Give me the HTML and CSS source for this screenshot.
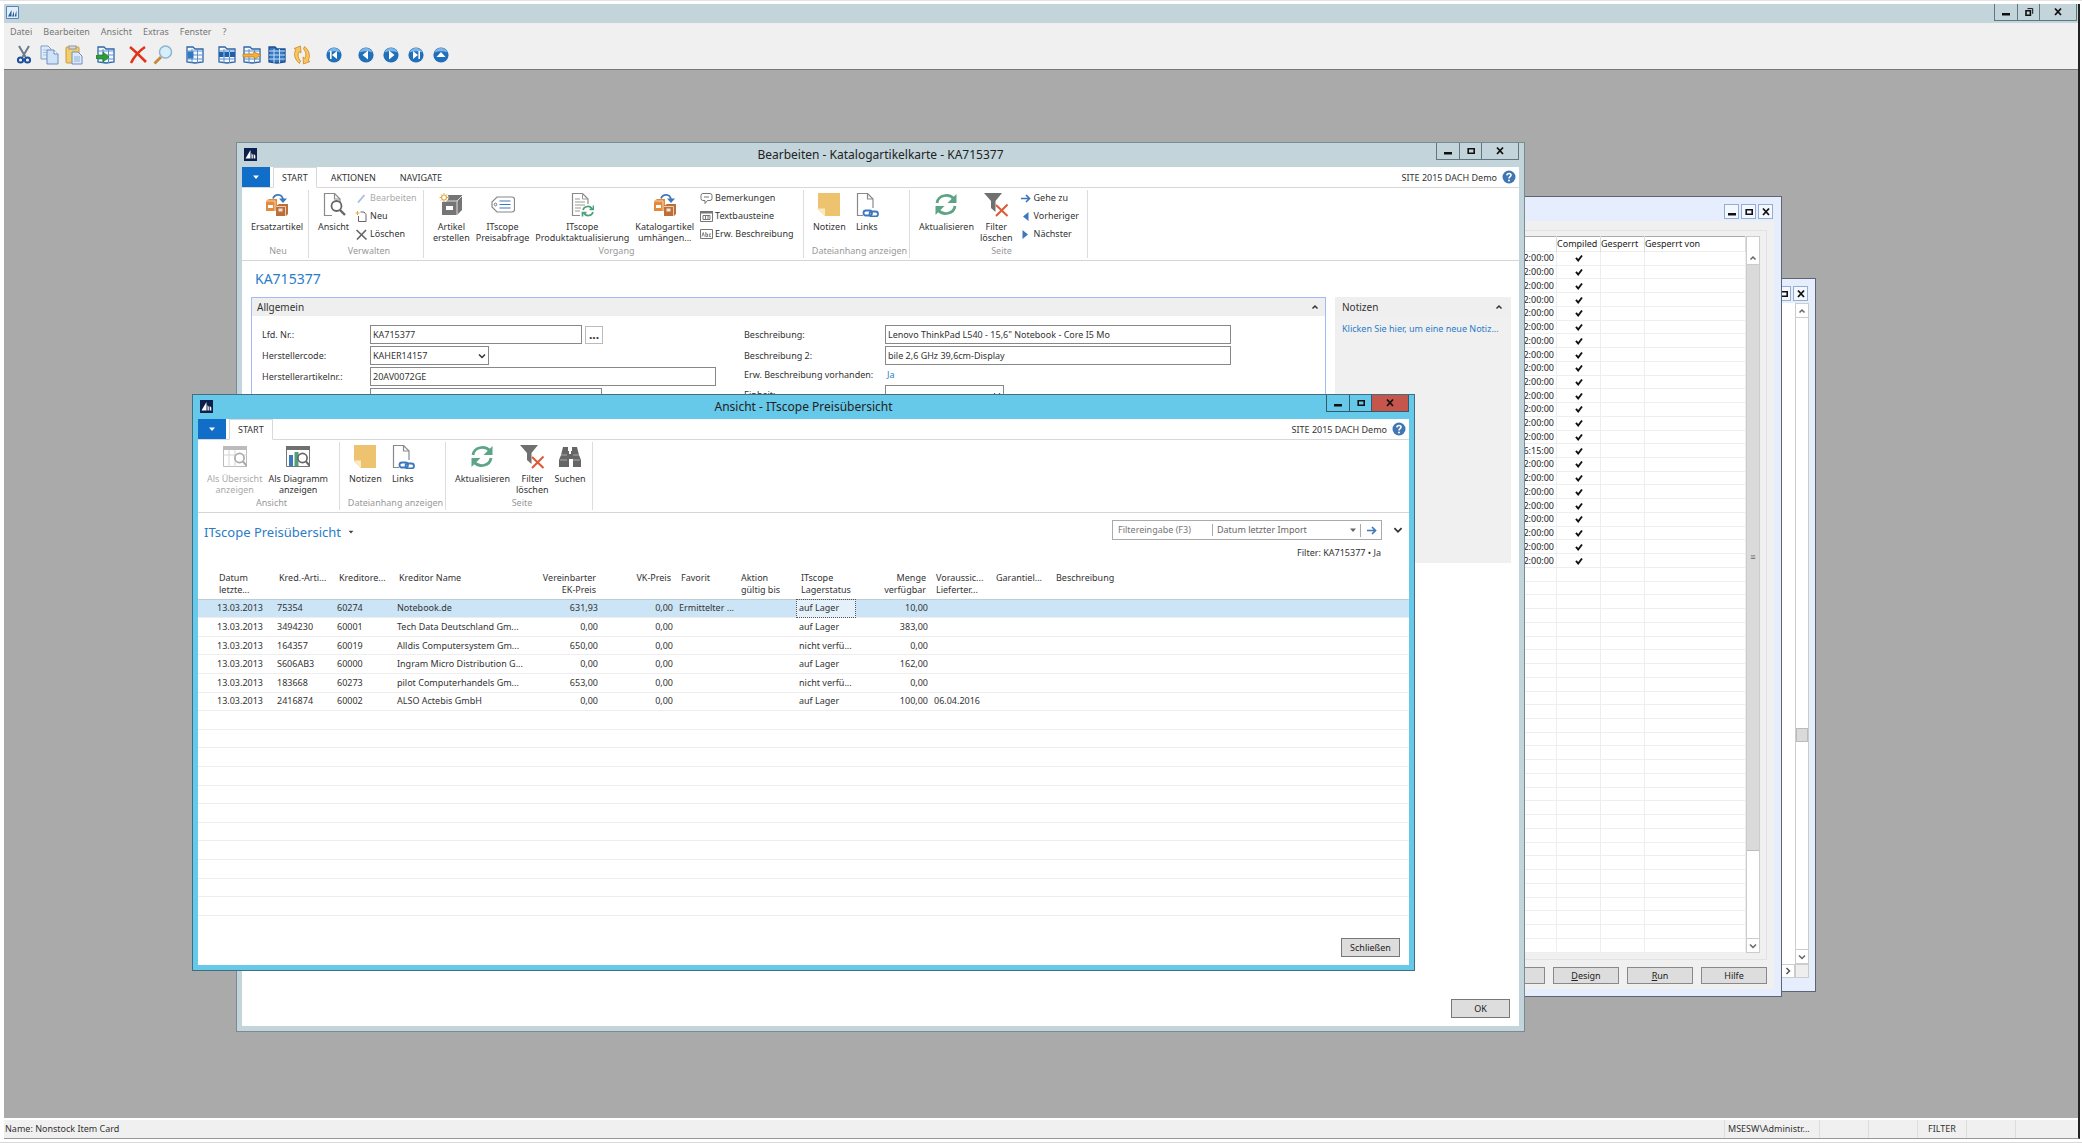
FILE: index.html
```
<!DOCTYPE html>
<html lang="de">

<head>
    <meta charset="UTF-8">
    <meta name="viewport" content="width=device-width, initial-scale=1.0">
    <title>Nonstock Item Card</title>
    <link rel="stylesheet" href="styles.css">
</head>

<body>
    <svg class="sprite" aria-hidden="true">
        <symbol id="i-main" viewBox="0 0 13 13">
            <path d="M.500.500h12v12H.500z" fill="#e3eef7" stroke="#4f86bb" />
            <path d="M2 10.500L5.500 4v6.500zM6 10.500L8 5v5.500zM8.500 10.500l2-6v6z" fill="#2a5f9c" />
        </symbol>
        <symbol id="i-app" viewBox="0 0 13 13">
            <rect width="13" height="13" fill="#0c1f4d" />
            <path d="M1.500 10.500L6.500 2v8.500zM7.500 10.500V5l1.300 2v3.500zM9.700 10.500V6l1.600 1.500v3z" fill="#fff" />
        </symbol>
        <symbol id="i-min" viewBox="0 0 10 10"><path d="M1 6h8v2.500H1z" fill="#111" /></symbol>
        <symbol id="i-max" viewBox="0 0 10 10"><path d="M2.200 2.700h6v4.600h-6z" fill="none" stroke="#111" stroke-width="1.600" /></symbol>
        <symbol id="i-restore" viewBox="0 0 10 10">
            <path d="M2 3.800h4.400v4.400H2z" fill="none" stroke="#111" stroke-width="1.600" />
            <path d="M3.500 1.600h5.200v5.200" fill="none" stroke="#111" />
        </symbol>
        <symbol id="i-close" viewBox="0 0 10 10"><path d="M2 1.500L8 8M8 1.500L2 8" stroke="#111" stroke-width="1.800" /></symbol>
        <symbol id="i-up" viewBox="0 0 10 10"><path d="M2.500 6.500L5 4l2.500 2.500" fill="none" stroke="currentColor" stroke-width="1.500" /></symbol>
        <symbol id="i-down" viewBox="0 0 10 10"><path d="M2 3.500l3 3 3-3" fill="none" stroke="currentColor" stroke-width="1.500" /></symbol>
        <symbol id="i-right" viewBox="0 0 10 10"><path d="M3.500 2l3 3-3 3" fill="none" stroke="currentColor" stroke-width="1.500" /></symbol>
        <symbol id="i-caret" viewBox="0 0 10 10"><path d="M2 3.500h6l-3 3.500z" fill="currentColor" /></symbol>
        <symbol id="i-check" viewBox="0 0 10 10"><path d="M2 4.800l2.200 2.700L8 2.500" fill="none" stroke="#111" stroke-width="1.900" /></symbol>
        <symbol id="i-help" viewBox="0 0 14 14">
            <circle cx="7" cy="7" r="6.500" fill="#3f76b3" />
            <path d="M4.900 5.400C5 2.800 9.200 2.900 9 5.300 8.900 6.700 7 6.700 7 8.400" fill="none" stroke="#fff" stroke-width="1.600" />
            <circle cx="7" cy="10.600" r="1" fill="#fff" />
        </symbol>

        <!-- toolbar -->
        <symbol id="t-cut" viewBox="0 0 20 20">
            <path d="M5 1l6.500 11M15 1L8.500 12" stroke="#6d7b8a" stroke-width="2" />
            <circle cx="6.500" cy="15" r="2.600" fill="none" stroke="#1d4f9c" stroke-width="2" />
            <circle cx="13.500" cy="15" r="2.600" fill="none" stroke="#1d4f9c" stroke-width="2" />
        </symbol>
        <symbol id="t-copy" viewBox="0 0 20 20">
            <path d="M2 1h7l3 3v10H2z" fill="#dceafa" stroke="#7f9fc6" />
            <path d="M4 5h6M4 7.500h6M4 10h6" stroke="#a9c3e4" />
            <path d="M8 5h7l4 4v10H8z" fill="#d0e2f8" stroke="#6c90bf" />
            <path d="M15 5v4h4" fill="#fff" stroke="#6c90bf" />
        </symbol>
        <symbol id="t-paste" viewBox="0 0 20 20">
            <rect x="2" y="2" width="13" height="16" rx="1" fill="#f4cd6c" stroke="#c89a3c" />
            <rect x="5" y="1" width="7" height="3" fill="#d9dde2" stroke="#8c949e" />
            <path d="M8 7h6l4 4v8H8z" fill="#dceafa" stroke="#6c90bf" />
            <path d="M10 12h6M10 14h6M10 16h6" stroke="#92b2dc" />
        </symbol>
        <symbol id="t-grid" viewBox="0 0 20 20">
            <path d="M2 2h6l2 2h8v13l-8 1-8-1z" fill="#f4f9ff" stroke="#2f66a8" stroke-width="1.300" />
            <path d="M2 6h16M2 10h16M2 14h16M7 4v14M12.500 4v14" stroke="#5f8fc9" fill="none" />
        </symbol>
        <symbol id="t-gridgo" viewBox="0 0 20 20">
            <use href="#t-grid" />
            <path d="M0 10.500h7V7l6 5-6 5v-3.500H0z" fill="#2ca02c" stroke="#1a7a22" stroke-width=".7" />
        </symbol>
        <symbol id="t-delete" viewBox="0 0 20 20"><path d="M2 2c5 4 10 9 16 15M17 2C11 6 6 12 3 18" fill="none" stroke="#e0341a" stroke-width="2.600" /></symbol>
        <symbol id="t-find" viewBox="0 0 20 20">
            <path d="M1.500 18.500L8 12" stroke="#c48a3a" stroke-width="2.800" />
            <circle cx="12.500" cy="7" r="6" fill="#d8effb" stroke="#8fb4cc" stroke-width="1.500" />
        </symbol>
        <symbol id="t-gridcol" viewBox="0 0 20 20"><use href="#t-grid" /><path d="M2.500 6.500h6v7h-6z" fill="#2f78c4" /></symbol>
        <symbol id="t-gridrow" viewBox="0 0 20 20"><use href="#t-grid" /><path d="M2 7h16v5H2z" fill="#1f5fa9" /><path d="M7 7v5M12.500 7v5" stroke="#9cc4ee" /></symbol>
        <symbol id="t-gridedit" viewBox="0 0 20 20"><use href="#t-grid" /><path d="M1 9h10l1-2 7 3-6 4-1-2H1z" fill="#f4b13a" stroke="#b87a1c" stroke-width=".7" /></symbol>
        <symbol id="t-gridall" viewBox="0 0 20 20">
            <path d="M2 2h6l2 2h8v13l-8 1-8-1z" fill="#3679c2" stroke="#1d4f8f" stroke-width="1.300" />
            <path d="M2 6h16M2 10h16M2 14h16M7 4v14M12.500 4v14" stroke="#c3ddf7" fill="none" />
        </symbol>
        <symbol id="t-swap" viewBox="0 0 20 20">
            <path d="M7.500 18.500C2 14 1.500 8 4 4.500L2 3.500 8.500 1l.5 7-2-1.500C5.500 9.500 6 13.500 8.500 16z" fill="#fbc55c" stroke="#c88a28" stroke-width=".8" />
            <path d="M12.500 1.500C18 6 18.500 12 16 15.500l2 1-6.500 2.500-.5-7 2 1.500c1.500-3 1-7-1.500-9.500z" fill="#fbc55c" stroke="#c88a28" stroke-width=".8" />
        </symbol>
        <symbol id="t-ball" viewBox="0 0 20 20"><circle cx="10" cy="10" r="7.600" fill="#1f6fba" /><path d="M3.600 7.500a6.800 6.800 0 0 1 12.800 0C12 5.800 8 5.800 3.600 7.500z" fill="#7db6e6" /></symbol>
        <symbol id="t-first" viewBox="0 0 20 20"><use href="#t-ball" /><path d="M13 6v8l-5-4zM6 6h1.600v8H6z" fill="#fff" /></symbol>
        <symbol id="t-prev" viewBox="0 0 20 20"><use href="#t-ball" /><path d="M12 5.500v9L6.500 10z" fill="#fff" /></symbol>
        <symbol id="t-next" viewBox="0 0 20 20"><use href="#t-ball" /><path d="M8 5.500v9l5.500-4.500z" fill="#fff" /></symbol>
        <symbol id="t-last" viewBox="0 0 20 20"><use href="#t-ball" /><path d="M7 6v8l5-4zM12.400 6H14v8h-1.600z" fill="#fff" /></symbol>
        <symbol id="t-top" viewBox="0 0 20 20"><use href="#t-ball" /><path d="M5.500 12h9L10 7z" fill="#fff" /></symbol>

        <!-- ribbon, large -->
        <symbol id="r-boxes" viewBox="0 0 24 24">
            <path d="M8 5.500c2-5 9-5 10 1" fill="none" stroke="#3d78bd" stroke-width="1.800" />
            <path d="M14 5.500h8l-4 4.500z" fill="#3d78bd" />
            <path d="M1 8l3-2h8v11l-2 1H1z" fill="#e58a3a" /><path d="M3 12h5v3H3z" fill="#fff" /><path d="M1 8h9v10" fill="none" stroke="#fbe3cc" stroke-width=".8" />
            <path d="M11 13l3-2h9v10l-2 2H11z" fill="#b9703a" /><path d="M13.500 15.500h4v3h-4z" fill="#f6e2d2" /><path d="M11 13.500h9.500V23" fill="none" stroke="#fbe3cc" stroke-width=".8" />
        </symbol>
        <symbol id="r-view" viewBox="0 0 24 24">
            <path d="M10 22.500H2.500v-22h10l5.500 5.500v3" fill="#fff" stroke="#8a8a8a" stroke-width="1.200" />
            <path d="M12.500.500v5.500H18" fill="none" stroke="#8a8a8a" stroke-width="1.200" />
            <circle cx="14.500" cy="13" r="5" fill="#fff" stroke="#666" stroke-width="1.800" /><path d="M18 17l5 5" stroke="#666" stroke-width="2.400" />
        </symbol>
        <symbol id="r-create" viewBox="0 0 24 24">
            <path d="M3 7l4-5h16v15l-5 5H3z" fill="#757575" /><path d="M3 8h15v14M18 8l5-5" fill="none" stroke="#ddd" />
            <path d="M7 13h7v4H7z" fill="#fff" /><circle cx="5" cy="4.500" r="4.500" fill="#fff" /><circle cx="5" cy="4.500" r="2.500" fill="#fff" stroke="#e3ab45" stroke-width="1.200" />
            <path d="M5 0v1.500M5 7.500V9M.5 4.500H2M8 4.500h1.500M2 1.500l1 1M8 1.500l-1 1M2 7.500l1-1M8 7.500l-1-1" stroke="#e3ab45" />
        </symbol>
        <symbol id="r-tag" viewBox="0 0 24 24">
            <path d="M6 4h15q2.500 0 2.500 2.500v10Q23.500 19 21 19H6l-5-5V9z" fill="#fff" stroke="#888" stroke-width="1.200" />
            <circle cx="4.500" cy="11.500" r="1.300" fill="none" stroke="#777" /><path d="M8.500 8h11M8.500 11.500h11M8.500 15h11" stroke="#3d78bd" stroke-width="1.200" />
        </symbol>
        <symbol id="r-docsync" viewBox="0 0 24 24">
            <path d="M10 22.500H2.500v-22h10l5.500 5.500v5" fill="#fff" stroke="#8a8a8a" stroke-width="1.200" />
            <path d="M12.500.5V6H18M5 6h5M5 9h10M5 12h10M5 15h6M5 18h5" fill="none" stroke="#999" />
            <path d="M13 17c1-4 7-5 9-1M23.500 12.500v4h-4M23 19c-1 4-7 5-9 1M12.500 23.500v-4h4" fill="none" stroke="#4f9f78" stroke-width="1.700" />
        </symbol>
        <symbol id="r-note" viewBox="0 0 24 24"><path d="M1 0h22v23H8l-7-7z" fill="#edc36f" /><path d="M1 15.500h7V23z" fill="#fbe9bf" /></symbol>
        <symbol id="r-link" viewBox="0 0 24 24">
            <path d="M8 22.500H2.500v-22h10l5.500 5.500v9" fill="#fff" stroke="#8a8a8a" stroke-width="1.200" /><path d="M12.500.5V6H18" fill="none" stroke="#8a8a8a" stroke-width="1.200" />
            <rect x="8.500" y="17.500" width="8.500" height="5" rx="2.500" fill="none" stroke="#3d78bd" stroke-width="1.800" /><rect x="14.500" y="18.500" width="8.500" height="5" rx="2.500" fill="none" stroke="#3d78bd" stroke-width="1.800" />
        </symbol>
        <symbol id="r-refresh" viewBox="0 0 24 24">
            <path d="M3 10c1-8 12-10 17-4" fill="none" stroke="#5da487" stroke-width="2.800" /><path d="M22.500 1v9h-9z" fill="#5da487" />
            <path d="M21 13c-1 8-12 10-17 4" fill="none" stroke="#5da487" stroke-width="2.800" /><path d="M1.500 22v-9h9z" fill="#5da487" />
        </symbol>
        <symbol id="r-filter" viewBox="0 0 24 24"><path d="M0 0h18l-6.500 8v11L7 15V8z" fill="#707070" /><path d="M12 12l11.500 11M23.500 11.500L12 23" stroke="#dd5b38" stroke-width="2" /></symbol>
        <symbol id="r-list" viewBox="0 0 24 24">
            <path d="M.500 1.500h23v20H.500z" fill="#fff" stroke="#bbb" /><path d="M0 1h24v4H0z" fill="#bbb" /><path d="M6 5v17M12 5v17M.5 10H24" stroke="#d5d5d5" />
            <circle cx="16.500" cy="13" r="4.600" fill="#fff" stroke="#aaa" stroke-width="1.700" /><path d="M20 16.500l4 4.500" stroke="#aaa" stroke-width="2" />
        </symbol>
        <symbol id="r-chart" viewBox="0 0 24 24">
            <path d="M.500 1.500h23v20H.500z" fill="#fff" stroke="#777" /><path d="M0 1h24v4H0z" fill="#707070" />
            <path d="M3 10h4v11H3z" fill="#3d78bd" /><path d="M8.500 7h4v14h-4z" fill="#4f9f78" />
            <circle cx="16.500" cy="13" r="4.600" fill="#fff" stroke="#666" stroke-width="1.700" /><path d="M20 16.500l4 4.500" stroke="#666" stroke-width="2" />
        </symbol>
        <symbol id="r-search" viewBox="0 0 24 24">
            <path d="M5 2h5v4h1v3h2V6h1V2h5l2 8 2 5v7h-8v-8h-4v8H1v-7l2-5z" fill="#666" /><path d="M3 10h6M15 10h6M2 15h7M15 15h7" stroke="#aaa" />
        </symbol>

        <!-- ribbon, small -->
        <symbol id="s-edit" viewBox="0 0 13 13"><path d="M3 10.500L9.500 3" stroke="#a3bedb" stroke-width="1.800" /></symbol>
        <symbol id="s-new" viewBox="0 0 13 13"><path d="M5.500 2h3.500l2 2.500v7H3.500V6" fill="#fff" stroke="#666" /><path d="M2.500 1v4M.5 3h4" stroke="#e3ab45" /></symbol>
        <symbol id="s-del" viewBox="0 0 13 13"><path d="M1.500 2l10 9.500M11 2L2 11.500" stroke="#666" stroke-width="1.700" /></symbol>
        <symbol id="s-comment" viewBox="0 0 13 13"><path d="M3 1.500h7q2 0 2 2v3q0 2-2 2H7.500l-2.500 3v-3H3q-2 0-2-2v-3q0-2 2-2zM4 5h5" fill="none" stroke="#777" /></symbol>
        <symbol id="s-text" viewBox="0 0 13 13"><path d="M.500 1.500h12v10H.500zM3 5.500h7v4H3zM5.500 5.500v4M8 5.500v4" fill="none" stroke="#777" /><path d="M0 1h13v2.500H0z" fill="#777" /></symbol>
        <symbol id="s-abc" viewBox="0 0 13 13"><path d="M.500 1.500h12v9H.500z" fill="#fff" stroke="#777" /><path d="M2 8.500l1.200-4 1.200 4M5.800 4v4.500h1.700V6H6M11 6H9.300v2.500H11" fill="none" stroke="#777" stroke-width=".9" /></symbol>
        <symbol id="s-goto" viewBox="0 0 13 13"><path d="M2 6.500h8M7 3l3.500 3.500L7 10" fill="none" stroke="#3d78bd" stroke-width="1.700" /></symbol>
        <symbol id="s-prev" viewBox="0 0 13 13"><path d="M9.500 2v9L4 6.500z" fill="#3d78bd" /></symbol>
        <symbol id="s-next" viewBox="0 0 13 13"><path d="M3.500 2v9L9 6.500z" fill="#3d78bd" /></symbol>
    </svg>

    <div class="app">
        <header class="app-title">
            <svg class="app-icon"><use href="#i-main" /></svg>
            <div class="win-buttons">
                <button type="button" aria-label="Minimieren"><svg><use href="#i-min" /></svg></button>
                <button type="button" aria-label="Wiederherstellen"><svg><use href="#i-restore" /></svg></button>
                <button type="button" class="close" aria-label="Beenden"><svg><use href="#i-close" /></svg></button>
            </div>
        </header>
        <nav class="menu">
            <button type="button">Datei</button>
            <button type="button">Bearbeiten</button>
            <button type="button">Ansicht</button>
            <button type="button">Extras</button>
            <button type="button">Fenster</button>
            <button type="button">?</button>
        </nav>
        <div class="toolbar">
            <div class="tools">
                <button type="button" aria-label="Ausschneiden"><svg><use href="#t-cut" /></svg></button>
                <button type="button" aria-label="Kopieren"><svg><use href="#t-copy" /></svg></button>
                <button type="button" aria-label="Einfügen"><svg><use href="#t-paste" /></svg></button>
            </div>
            <div class="tools">
                <button type="button" aria-label="Neu einfügen"><svg><use href="#t-gridgo" /></svg></button>
            </div>
            <div class="tools">
                <button type="button" aria-label="Löschen"><svg><use href="#t-delete" /></svg></button>
                <button type="button" aria-label="Suchen"><svg><use href="#t-find" /></svg></button>
            </div>
            <div class="tools">
                <button type="button" aria-label="Feldfilter"><svg><use href="#t-gridcol" /></svg></button>
            </div>
            <div class="tools">
                <button type="button" aria-label="Tabellenfilter"><svg><use href="#t-gridrow" /></svg></button>
                <button type="button" aria-label="FlowFilter"><svg><use href="#t-gridedit" /></svg></button>
                <button type="button" aria-label="Alle anzeigen"><svg><use href="#t-gridall" /></svg></button>
                <button type="button" aria-label="Sortieren"><svg><use href="#t-swap" /></svg></button>
            </div>
            <div class="tools">
                <button type="button" aria-label="Erster"><svg><use href="#t-first" /></svg></button>
            </div>
            <div class="tools">
                <button type="button" aria-label="Vorheriger"><svg><use href="#t-prev" /></svg></button>
                <button type="button" aria-label="Nächster"><svg><use href="#t-next" /></svg></button>
                <button type="button" aria-label="Letzter"><svg><use href="#t-last" /></svg></button>
                <button type="button" aria-label="Übersicht"><svg><use href="#t-top" /></svg></button>
            </div>
        </div>

        <main class="desktop">
            <section class="classic classic-back">
                <div class="classic-title">
                    <button type="button" aria-label="Maximieren"><svg><use href="#i-max" /></svg></button>
                    <button type="button" aria-label="Schließen"><svg><use href="#i-close" /></svg></button>
                </div>
                <div class="classic-area">
                    <div class="scrollbar">
                        <button type="button" aria-label="Nach oben"><svg><use href="#i-up" /></svg></button>
                        <div class="track"><div class="thumb-small"></div></div>
                        <button type="button" aria-label="Nach unten"><svg><use href="#i-down" /></svg></button>
                    </div>
                </div>
                <div class="scroll-bottom">
                    <button type="button" aria-label="Nach rechts"><svg><use href="#i-right" /></svg></button>
                    <span></span>
                </div>
            </section>

            <section class="classic classic-front">
                <div class="classic-title">
                    <button type="button" aria-label="Minimieren"><svg><use href="#i-min" /></svg></button>
                    <button type="button" aria-label="Maximieren"><svg><use href="#i-max" /></svg></button>
                    <button type="button" aria-label="Schließen"><svg><use href="#i-close" /></svg></button>
                </div>
                <div class="designer">
                    <div class="objects-frame">
                        <table class="objects">
                            <thead>
                                <tr>
                                    <th class="o-time"></th>
                                    <th class="o-flag">Compiled</th>
                                    <th class="o-flag">Gesperrt</th>
                                    <th class="o-by">Gesperrt von</th>
                                </tr>
                            </thead>
                            <tbody id="objectRows"></tbody>
                        </table>
                        <div class="scrollbar">
                            <div class="scroll-head"></div>
                            <button type="button" aria-label="Nach oben"><svg><use href="#i-up" /></svg></button>
                            <div class="track"><div class="thumb">≡</div></div>
                            <button type="button" aria-label="Nach unten"><svg><use href="#i-down" /></svg></button>
                        </div>
                    </div>
                    <div class="designer-buttons">
                        <button type="button" aria-label="Neu"></button>
                        <button type="button"><u>D</u>esign</button>
                        <button type="button"><u>R</u>un</button>
                        <button type="button">Hilfe</button>
                    </div>
                </div>
            </section>

            <section class="window card-window">
                <div class="window-title">
                    <svg class="app-icon"><use href="#i-app" /></svg>
                    <h2>Bearbeiten - Katalogartikelkarte - KA715377</h2>
                    <div class="win-buttons">
                        <button type="button" aria-label="Minimieren"><svg><use href="#i-min" /></svg></button>
                        <button type="button" aria-label="Maximieren"><svg><use href="#i-max" /></svg></button>
                        <button type="button" class="close" aria-label="Schließen"><svg><use href="#i-close" /></svg></button>
                    </div>
                </div>
                <div class="window-body">
                    <div class="tabs">
                        <button type="button" class="file-tab" aria-label="Anwendungsmenü"><svg><use href="#i-caret" /></svg></button>
                        <button type="button" class="tab active">START</button>
                        <button type="button" class="tab">AKTIONEN</button>
                        <button type="button" class="tab">NAVIGATE</button>
                        <span class="company">SITE 2015 DACH Demo</span>
                        <button type="button" class="help" aria-label="Hilfe"><svg><use href="#i-help" /></svg></button>
                    </div>
                    <div class="ribbon">
                        <div class="group g-new">
                            <div class="items">
                                <button type="button" class="big"><svg><use href="#r-boxes" /></svg>Ersatzartikel</button>
                            </div>
                            <span class="caption">Neu</span>
                        </div>
                        <div class="group g-manage">
                            <div class="items">
                                <button type="button" class="big"><svg><use href="#r-view" /></svg>Ansicht</button>
                                <div class="smalls">
                                    <button type="button" class="small" disabled><svg><use href="#s-edit" /></svg>Bearbeiten</button>
                                    <button type="button" class="small"><svg><use href="#s-new" /></svg>Neu</button>
                                    <button type="button" class="small"><svg><use href="#s-del" /></svg>Löschen</button>
                                </div>
                            </div>
                            <span class="caption">Verwalten</span>
                        </div>
                        <div class="group g-process">
                            <div class="items">
                                <button type="button" class="big"><svg><use href="#r-create" /></svg>Artikel<br>erstellen</button>
                                <button type="button" class="big"><svg><use href="#r-tag" /></svg>ITscope<br>Preisabfrage</button>
                                <button type="button" class="big"><svg><use href="#r-docsync" /></svg>ITscope<br>Produktaktualisierung</button>
                                <button type="button" class="big"><svg><use href="#r-boxes" /></svg>Katalogartikel<br>umhängen...</button>
                                <div class="smalls">
                                    <button type="button" class="small"><svg><use href="#s-comment" /></svg>Bemerkungen</button>
                                    <button type="button" class="small"><svg><use href="#s-text" /></svg>Textbausteine</button>
                                    <button type="button" class="small"><svg><use href="#s-abc" /></svg>Erw. Beschreibung</button>
                                </div>
                            </div>
                            <span class="caption">Vorgang</span>
                        </div>
                        <div class="group g-attach">
                            <div class="items">
                                <button type="button" class="big"><svg><use href="#r-note" /></svg>Notizen</button>
                                <button type="button" class="big"><svg><use href="#r-link" /></svg>Links</button>
                            </div>
                            <span class="caption">Dateianhang anzeigen</span>
                        </div>
                        <div class="group g-page">
                            <div class="items">
                                <button type="button" class="big"><svg><use href="#r-refresh" /></svg>Aktualisieren</button>
                                <button type="button" class="big"><svg><use href="#r-filter" /></svg>Filter<br>löschen</button>
                                <div class="smalls">
                                    <button type="button" class="small"><svg><use href="#s-goto" /></svg>Gehe zu</button>
                                    <button type="button" class="small"><svg><use href="#s-prev" /></svg>Vorheriger</button>
                                    <button type="button" class="small"><svg><use href="#s-next" /></svg>Nächster</button>
                                </div>
                            </div>
                            <span class="caption">Seite</span>
                        </div>
                    </div>
                    <h1 class="card-heading">KA715377</h1>
                    <div class="card-content">
                        <form class="fasttab">
                            <div class="fasttab-head">Allgemein<svg><use href="#i-up" /></svg></div>
                            <div class="fields">
                                <div class="column column-left">
                                    <div class="field">
                                        <label for="no">Lfd. Nr.:</label>
                                        <input type="text" id="no" class="w-no" value="KA715377">
                                        <button type="button" class="assist" aria-label="Nummer wählen">...</button>
                                    </div>
                                    <div class="field">
                                        <label for="mcode">Herstellercode:</label>
                                        <div class="combo w-code">
                                            <select id="mcode"><option>KAHER14157</option></select>
                                            <svg><use href="#i-down" /></svg>
                                        </div>
                                    </div>
                                    <div class="field">
                                        <label for="mno">Herstellerartikelnr.:</label>
                                        <input type="text" id="mno" class="w-text" value="20AV0072GE">
                                    </div>
                                    <div class="field">
                                        <label for="vendor">Kreditornr.:</label>
                                        <input type="text" id="vendor" class="w-vendor" value="60274">
                                    </div>
                                </div>
                                <div class="column column-right">
                                    <div class="field">
                                        <label for="desc">Beschreibung:</label>
                                        <input type="text" id="desc" class="w-text" value="Lenovo ThinkPad L540 - 15,6&quot; Notebook - Core I5 Mo">
                                    </div>
                                    <div class="field">
                                        <label for="desc2">Beschreibung 2:</label>
                                        <input type="text" id="desc2" class="w-text" value="bile 2,6 GHz 39,6cm-Display">
                                    </div>
                                    <div class="field field-link">
                                        <span class="label">Erw. Beschreibung vorhanden:</span>
                                        <a href="#">Ja</a>
                                    </div>
                                    <div class="field">
                                        <label for="unit">Einheit:</label>
                                        <div class="combo w-code">
                                            <select id="unit"><option></option></select>
                                            <svg><use href="#i-down" /></svg>
                                        </div>
                                    </div>
                                </div>
                            </div>
                        </form>
                        <aside class="notes">
                            <div class="notes-head">Notizen<svg><use href="#i-up" /></svg></div>
                            <a href="#">Klicken Sie hier, um eine neue Notiz...</a>
                        </aside>
                    </div>
                    <div class="window-footer">
                        <button type="button">OK</button>
                    </div>
                </div>
            </section>

            <section class="window active-window">
                <div class="window-title">
                    <svg class="app-icon"><use href="#i-app" /></svg>
                    <h2>Ansicht - ITscope Preisübersicht</h2>
                    <div class="win-buttons">
                        <button type="button" aria-label="Minimieren"><svg><use href="#i-min" /></svg></button>
                        <button type="button" aria-label="Maximieren"><svg><use href="#i-max" /></svg></button>
                        <button type="button" class="close" aria-label="Schließen"><svg><use href="#i-close" /></svg></button>
                    </div>
                </div>
                <div class="window-body">
                    <div class="tabs">
                        <button type="button" class="file-tab" aria-label="Anwendungsmenü"><svg><use href="#i-caret" /></svg></button>
                        <button type="button" class="tab active">START</button>
                        <span class="company">SITE 2015 DACH Demo</span>
                        <button type="button" class="help" aria-label="Hilfe"><svg><use href="#i-help" /></svg></button>
                    </div>
                    <div class="ribbon">
                        <div class="group g-view">
                            <div class="items">
                                <button type="button" class="big" disabled><svg><use href="#r-list" /></svg>Als Übersicht<br>anzeigen</button>
                                <button type="button" class="big"><svg><use href="#r-chart" /></svg>Als Diagramm<br>anzeigen</button>
                            </div>
                            <span class="caption">Ansicht</span>
                        </div>
                        <div class="group g-attach">
                            <div class="items">
                                <button type="button" class="big"><svg><use href="#r-note" /></svg>Notizen</button>
                                <button type="button" class="big"><svg><use href="#r-link" /></svg>Links</button>
                            </div>
                            <span class="caption">Dateianhang anzeigen</span>
                        </div>
                        <div class="group g-find">
                            <div class="items">
                                <button type="button" class="big"><svg><use href="#r-refresh" /></svg>Aktualisieren</button>
                                <button type="button" class="big"><svg><use href="#r-filter" /></svg>Filter<br>löschen</button>
                                <button type="button" class="big"><svg><use href="#r-search" /></svg>Suchen</button>
                            </div>
                            <span class="caption">Seite</span>
                        </div>
                    </div>
                    <div class="list-head">
                        <h1>ITscope Preisübersicht<svg><use href="#i-caret" /></svg></h1>
                        <div class="filter-area">
                            <div class="filter-box">
                                <input type="text" placeholder="Filtereingabe (F3)" aria-label="Filtereingabe">
                                <div class="combo filter-field">
                                    <select aria-label="Filterfeld"><option>Datum letzter Import</option></select>
                                    <svg><use href="#i-caret" /></svg>
                                </div>
                                <button type="button" class="go" aria-label="Filter anwenden"><svg><use href="#s-goto" /></svg></button>
                            </div>
                            <button type="button" class="expand" aria-label="Filterbereich"><svg><use href="#i-down" /></svg></button>
                        </div>
                    </div>
                    <p class="filter-text">Filter: KA715377 • Ja</p>
                    <table class="prices">
                        <colgroup>
                            <col class="c-pad"><col class="c-60"><col class="c-60"><col class="c-60"><col class="c-name"><col class="c-75"><col class="c-75">
                            <col class="c-60"><col class="c-60"><col class="c-60"><col class="c-75"><col class="c-60"><col class="c-60"><col>
                        </colgroup>
                        <thead>
                            <tr>
                                <th></th>
                                <th>Datum<br>letzte...</th>
                                <th>Kred.-Arti...</th>
                                <th>Kreditore...</th>
                                <th>Kreditor Name</th>
                                <th class="num">Vereinbarter<br>EK-Preis</th>
                                <th class="num">VK-Preis</th>
                                <th>Favorit</th>
                                <th>Aktion<br>gültig bis</th>
                                <th>ITscope<br>Lagerstatus</th>
                                <th class="num">Menge<br>verfügbar</th>
                                <th>Voraussic...<br>Lieferter...</th>
                                <th>Garantiel...</th>
                                <th>Beschreibung</th>
                            </tr>
                        </thead>
                        <tbody id="priceRows"></tbody>
                    </table>
                    <div class="window-footer">
                        <button type="button">Schließen</button>
                    </div>
                </div>
            </section>
        </main>

        <footer class="status">
            <span class="s-name">Name: Nonstock Item Card</span>
            <span class="s-user">MSESW\Administr...</span>
            <span></span>
            <span></span>
            <span class="s-filter">FILTER</span>
            <span></span>
            <span></span>
        </footer>
    </div>

    <script>
        const prices = [
            ['13.03.2013', '75354', '60274', 'Notebook.de', '631,93', '0,00', 'Ermittelter ...', '', 'auf Lager', '10,00', '', '', ''],
            ['13.03.2013', '3494230', '60001', 'Tech Data Deutschland Gm...', '0,00', '0,00', '', '', 'auf Lager', '383,00', '', '', ''],
            ['13.03.2013', '164357', '60019', 'Alldis Computersystem Gm...', '650,00', '0,00', '', '', 'nicht verfü...', '0,00', '', '', ''],
            ['13.03.2013', 'S606AB3', '60000', 'Ingram Micro Distribution G...', '0,00', '0,00', '', '', 'auf Lager', '162,00', '', '', ''],
            ['13.03.2013', '183668', '60273', 'pilot Computerhandels Gm...', '653,00', '0,00', '', '', 'nicht verfü...', '0,00', '', '', ''],
            ['13.03.2013', '2416874', '60002', 'ALSO Actebis GmbH', '0,00', '0,00', '', '', 'auf Lager', '100,00', '06.04.2016', '', '']
        ];
        const numeric = [4, 5, 9];
        const totalPriceRows = 17;

        let priceHtml = '';
        for (let i = 0; i < totalPriceRows; i++) {
            const row = prices[i] || new Array(13).fill('');
            priceHtml += `<tr${i === 0 ? ' class="selected"' : ''}><td></td>`;
            row.forEach((value, col) => {
                let cls = numeric.includes(col) ? 'num' : '';
                if (i === 0 && col === 8) cls = 'focus';
                priceHtml += `<td class="${cls}">${value}</td>`;
            });
            priceHtml += '</tr>';
        }
        document.getElementById('priceRows').innerHTML = priceHtml;

        const objectCount = 23;
        const totalObjectRows = 51;

        let objectHtml = '';
        for (let i = 0; i < totalObjectRows; i++) {
            const used = i < objectCount;
            const time = used ? (i === 14 ? '16:15:00' : '12:00:00') : '';
            const check = used ? '<svg><use href="#i-check" /></svg>' : '';
            objectHtml += `<tr><td class="time">${time}</td><td class="check">${check}</td><td></td><td></td></tr>`;
        }
        document.getElementById('objectRows').innerHTML = objectHtml;
    </script>
</body>

</html>
```

FILE: styles.css
```
* {
    box-sizing: border-box;
}

body {
    margin: 0;
    height: 100vh;
    padding: 3px 2px 3px 4px;
    background-color: #fff;
    border-top: 1px solid #e2e2e2;
    border-bottom: 1px solid #d8d8d8;
    font-family: "Noto Sans", "Open Sans", sans-serif;
    font-size: 9px;
    line-height: 12px;
    color: #333;
    overflow: hidden;
}

button,
input,
select {
    font: inherit;
    color: inherit;
    margin: 0;
    padding: 0;
    border: none;
    background: none;
    border-radius: 0;
}

button {
    display: flex;
    align-items: center;
    justify-content: center;
}

h1,
h2,
p {
    margin: 0;
    font-weight: normal;
}

a {
    color: #2a7cc7;
    text-decoration: none;
}

svg {
    display: block;
    width: 10px;
    height: 10px;
    flex: none;
}

.sprite {
    display: none;
}

/* application frame */
.app {
    display: flex;
    flex-direction: column;
    height: 100%;
    border-right: 2px solid #222;
    border-bottom: 1px solid #999;
    background-color: #f0f0f0;
}

.app-title {
    display: flex;
    justify-content: space-between;
    height: 19px;
    padding: 0 1px 0 2px;
    background-color: #c3d5db;
}

.app-icon {
    width: 13px;
    height: 13px;
}

.app-title .app-icon {
    margin-top: 2px;
}

.win-buttons {
    display: flex;
    height: 17px;
    border: 1px solid #5f7780;
    border-top: none;
}

.win-buttons button {
    width: 22px;
    height: 16px;
}

.win-buttons button + button {
    border-left: 1px solid #5f7780;
}

.win-buttons .close {
    width: 37px;
}

.menu {
    display: flex;
    gap: 11px;
    height: 18px;
    padding: 0 6px;
    color: #777;
}

.toolbar {
    display: flex;
    gap: 12px;
    height: 29px;
    padding: 4px 10px;
    border-bottom: 1px solid #777;
}

.tools {
    display: flex;
    gap: 5px;
}

.tools svg {
    width: 20px;
    height: 20px;
}

.desktop {
    position: relative;
    flex: 1;
    background-color: #aaa;
    overflow: hidden;
}

.status {
    display: flex;
    height: 20px;
    padding-right: 14px;
    border-top: 2px solid #fff;
}

.status span {
    width: 49px;
    padding: 3px;
    border-left: 1px solid #ddd;
    white-space: nowrap;
}

.status .s-name {
    flex: 1;
    padding-left: 1px;
    border: none;
}

.status .s-user {
    width: 95px;
}

.status .s-filter {
    text-align: center;
}

/* windows */
.window {
    position: absolute;
    display: flex;
    flex-direction: column;
    padding: 0 5px 5px;
    border: 1px solid #788a92;
    background-color: #c3d5db;
}

.card-window {
    left: 232px;
    top: 72px;
    width: 1289px;
    height: 890px;
}

.active-window {
    left: 188px;
    top: 324px;
    width: 1223px;
    height: 577px;
    background-color: #67c9e9;
    border-color: #3f6f80;
}

.window-title {
    display: grid;
    grid-template-columns: 1fr auto 1fr;
    height: 24px;
    flex: none;
}

.window-title h2 {
    font-size: 12px;
    line-height: 24px;
    color: #222;
}

.window-title .app-icon {
    margin: 5px 2px;
}

.window-title .win-buttons {
    justify-self: end;
}

.active-window .win-buttons,
.active-window .win-buttons button {
    border-color: #33596b;
}

.active-window .close {
    background-color: #c6564c;
}

.window-body {
    display: flex;
    flex-direction: column;
    flex: 1;
    min-height: 0;
    background-color: #fff;
}

.tabs {
    display: flex;
    height: 21px;
    flex: none;
    padding-right: 3px;
    border-bottom: 1px solid #d8d8d8;
}

.file-tab {
    width: 28px;
    height: 20px;
    margin-right: 3px;
    background-color: #106dc8;
    color: #fff;
}

.tab {
    padding: 0 10px;
    margin-right: 4px;
    height: 21px;
}

.tab.active {
    border: 1px solid #d8d8d8;
    border-bottom-color: #fff;
    padding: 0 8px;
    background-color: #fff;
}

.company {
    margin-left: auto;
    line-height: 22px;
}

.help {
    margin-left: 5px;
}

.help svg {
    width: 14px;
    height: 14px;
}

.ribbon {
    display: flex;
    height: 73px;
    flex: none;
    padding: 2px 0;
    border-bottom: 1px solid #d5d5d5;
}

.group {
    display: flex;
    flex-direction: column;
    padding-left: 6px;
    border-right: 1px solid #ddd;
}

.items {
    display: flex;
    height: 55px;
}

.caption {
    text-align: center;
    color: #999;
    white-space: nowrap;
}

.big {
    flex-direction: column;
    justify-content: flex-start;
    min-width: 36px;
    padding: 3px 3px 0;
    line-height: 11px;
    white-space: nowrap;
}

.big svg {
    width: 24px;
    height: 24px;
    margin-bottom: 4px;
}

.smalls {
    display: flex;
    flex-direction: column;
    gap: 2px;
    margin-left: 3px;
}

.small {
    justify-content: flex-start;
    gap: 2px;
    height: 16px;
    white-space: nowrap;
}

.small svg {
    width: 13px;
    height: 13px;
}

.big:disabled,
.small:disabled {
    color: #aaa;
}

.g-new {
    width: 67px;
}

.g-manage {
    width: 115px;
}

.g-process {
    width: 380px;
}

.g-attach {
    width: 106px;
}

.g-page {
    width: 178px;
}

.g-view {
    width: 142px;
}

.g-find {
    width: 147px;
}

.window-footer {
    display: flex;
    justify-content: flex-end;
    margin-top: auto;
    padding: 8px 9px;
}

.window-footer button {
    width: 59px;
    height: 19px;
    border: 1px solid #777;
    background-color: #ddd;
    color: #222;
}

/* item card */
.card-heading {
    padding: 8px 13px 9px;
    font-size: 14px;
    line-height: 19px;
    color: #2a7cc7;
}

.card-content {
    display: flex;
    gap: 9px;
    padding: 0 8px 0 9px;
    height: 266px;
}

.fasttab {
    flex: 1;
    border: 1px solid #a3bbf5;
}

.fasttab-head,
.notes-head {
    display: flex;
    align-items: center;
    justify-content: space-between;
    height: 18px;
    padding: 0 5px;
    background-color: #efefef;
    font-size: 10px;
}

.fields {
    display: flex;
    padding: 9px 0 0 10px;
}

.column {
    display: flex;
    flex-direction: column;
    gap: 2px;
}

.column-left {
    width: 482px;
}

.field {
    display: flex;
    align-items: center;
    height: 19px;
}

.field label,
.field .label {
    width: 108px;
}

.column-right .field label,
.column-right .label {
    width: 141px;
}

.field input,
.field select {
    height: 19px;
    padding: 0 2px;
    border: 1px solid #888;
    background-color: #fff;
}

.combo {
    display: grid;
    align-items: center;
}

.combo select {
    grid-area: 1 / 1;
    width: 100%;
    appearance: none;
}

.combo svg {
    grid-area: 1 / 1;
    justify-self: end;
    margin-right: 2px;
    pointer-events: none;
}

.w-no {
    width: 212px;
}

.w-code {
    width: 119px;
}

.w-text {
    width: 346px;
}

.w-vendor {
    width: 232px;
}

.assist {
    width: 18px;
    height: 18px;
    margin-left: 3px;
    border: 1px solid #bbb;
    font-size: 12px;
    font-weight: bold;
}

.field-link {
    height: 16px;
}

.field-link a {
    padding-left: 2px;
}

.notes {
    width: 176px;
    background-color: #f0f0f0;
}

.notes-head {
    height: 20px;
    padding: 0 7px;
}

.notes a {
    display: block;
    padding: 6px 7px;
    white-space: nowrap;
}

/* price list */
.list-head {
    display: flex;
    justify-content: space-between;
    padding: 7px 5px 0 6px;
    flex: none;
}

.list-head h1 {
    display: flex;
    align-items: center;
    gap: 6px;
    font-size: 13px;
    line-height: 24px;
    color: #2a7cc7;
}

.list-head h1 svg {
    width: 8px;
    height: 8px;
    color: #444;
}

.filter-area {
    display: flex;
    align-items: center;
    height: 20px;
    gap: 10px;
}

.filter-box {
    display: flex;
    align-items: center;
    width: 270px;
    height: 20px;
    border: 1px solid #aaa;
    color: #666;
}

.filter-box input {
    width: 100px;
    padding: 0 5px;
    border-right: 1px solid #aaa;
}

.filter-box input::placeholder {
    color: #777;
}

.filter-field {
    flex: 1;
}

.filter-field select {
    padding-left: 4px;
}

.go {
    width: 21px;
    border-left: 1px solid #aaa;
}

.go svg {
    width: 13px;
    height: 13px;
}

.expand svg {
    width: 12px;
    height: 12px;
}

.filter-text {
    padding: 3px 28px 0 0;
    text-align: right;
}

.prices {
    width: 100%;
    height: 344px;
    margin-top: 13px;
    border-collapse: collapse;
    table-layout: fixed;
}

.c-pad {
    width: 16px;
}

.c-60 {
    width: 60px;
}

.c-75 {
    width: 75px;
}

.c-name {
    width: 132px;
}

.prices th {
    height: 27px;
    padding: 0 5px;
    font-weight: normal;
    text-align: left;
    vertical-align: top;
    white-space: nowrap;
}

.prices td {
    height: 18px;
    padding: 0 3px;
    border-bottom: 1px solid #eee;
    white-space: nowrap;
    line-height: 14px;
}

.prices .num {
    text-align: right;
}

.prices .selected td {
    background-color: #cce5f6;
    border-top: 1px solid #c0ccd4;
}

.prices .selected .focus {
    background-color: #e4f1fb;
    outline: 1px dotted #555;
    outline-offset: -1px;
}

/* classic client windows */
.classic {
    position: absolute;
    display: flex;
    flex-direction: column;
    padding: 7px;
    border: 1px solid #5c6478;
    background-color: #e6edfc;
    color: #222;
}

.classic-back {
    left: 1496px;
    top: 208px;
    width: 316px;
    height: 714px;
    padding: 7px 6px 13px;
}

.classic-front {
    left: 1296px;
    top: 126px;
    width: 482px;
    height: 801px;
}

.classic-title {
    display: flex;
    justify-content: flex-end;
    gap: 2px;
    height: 17px;
    padding-right: 1px;
}

.classic-title button {
    width: 15px;
    height: 15px;
    border: 1px solid #93aed4;
    background-color: #f3f7ff;
}

.classic-area {
    display: flex;
    justify-content: flex-end;
    flex: 1;
    background-color: #fff;
}

.scrollbar {
    display: flex;
    flex-direction: column;
    width: 14px;
    border: 1px solid #ccc;
    color: #666;
}

.scrollbar button {
    height: 13px;
    background-color: #fff;
}

.track {
    display: flex;
    flex-direction: column;
    flex: 1;
    border: solid #ccc;
    border-width: 1px 0;
    background-color: #fff;
}

.thumb {
    display: flex;
    align-items: center;
    justify-content: center;
    flex: none;
    height: 87%;
    background-color: #dadada;
    border-bottom: 1px solid #bbb;
}

.thumb-small {
    height: 14px;
    margin: auto 0;
    background-color: #dadada;
    border: 1px solid #bbb;
    /* scrolled about two thirds down */
    margin-bottom: 207px;
}

.scroll-bottom {
    display: flex;
    justify-content: flex-end;
    height: 14px;
    background-color: #fff;
}

.scroll-bottom button,
.scroll-bottom span {
    width: 14px;
    border: 1px solid #ccc;
    color: #555;
}

.scroll-bottom span {
    background-color: #eee;
}

.designer {
    display: flex;
    flex-direction: column;
    flex: 1;
    gap: 7px;
    padding: 9px 7px 5px;
    background-color: #f0f0f0;
}

.objects-frame {
    display: flex;
    flex: 1;
    padding: 5px 6px 6px 0;
    border: 1px solid #e2e2e2;
}

.objects {
    flex: 1;
    height: 717px;
    border-collapse: collapse;
    table-layout: fixed;
    background-color: #fff;
    border-top: 1px solid #aaa;
}

.objects th {
    height: 15px;
    padding: 0;
    font-weight: normal;
    text-align: left;
    border-right: 1px solid #ddd;
}

.objects td {
    height: 13px;
    padding: 0 2px;
    border: 1px solid #eee;
    line-height: 12px;
}

.objects .time {
    text-align: right;
}

.objects .check svg {
    margin: 0 auto;
}

.o-flag {
    width: 44px;
}

.o-by {
    width: 101px;
}

.scroll-head {
    height: 14px;
    background-color: #fff;
}

.designer-buttons {
    display: flex;
    justify-content: flex-end;
    gap: 8px;
}

.designer-buttons button {
    width: 66px;
    height: 17px;
    border: 1px solid #888;
    background-color: #ddd;
}
```
